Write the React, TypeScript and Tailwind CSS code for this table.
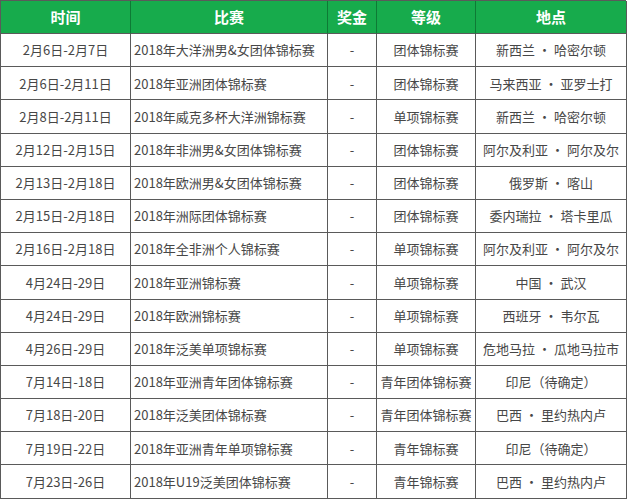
import React from "react";

const rows: [string, string, string, string, string][] = [
  ["2月6日-2月7日", "2018年大洋洲男&女团体锦标赛", "-", "团体锦标赛", "新西兰 · 哈密尔顿"],
  ["2月6日-2月11日", "2018年亚洲团体锦标赛", "-", "团体锦标赛", "马来西亚 · 亚罗士打"],
  ["2月8日-2月11日", "2018年威克多杯大洋洲锦标赛", "-", "单项锦标赛", "新西兰 · 哈密尔顿"],
  ["2月12日-2月15日", "2018年非洲男&女团体锦标赛", "-", "团体锦标赛", "阿尔及利亚 · 阿尔及尔"],
  ["2月13日-2月18日", "2018年欧洲男&女团体锦标赛", "-", "团体锦标赛", "俄罗斯 · 喀山"],
  ["2月15日-2月18日", "2018年洲际团体锦标赛", "-", "团体锦标赛", "委内瑞拉 · 塔卡里瓜"],
  ["2月16日-2月18日", "2018年全非洲个人锦标赛", "-", "单项锦标赛", "阿尔及利亚 · 阿尔及尔"],
  ["4月24日-29日", "2018年亚洲锦标赛", "-", "单项锦标赛", "中国 · 武汉"],
  ["4月24日-29日", "2018年欧洲锦标赛", "-", "单项锦标赛", "西班牙 · 韦尔瓦"],
  ["4月26日-29日", "2018年泛美单项锦标赛", "-", "单项锦标赛", "危地马拉 · 瓜地马拉市"],
  ["7月14日-18日", "2018年亚洲青年团体锦标赛", "-", "青年团体锦标赛", "印尼（待确定）"],
  ["7月18日-20日", "2018年泛美团体锦标赛", "-", "青年团体锦标赛", "巴西 · 里约热内卢"],
  ["7月19日-22日", "2018年亚洲青年单项锦标赛", "-", "青年锦标赛", "印尼（待确定）"],
  ["7月23日-26日", "2018年U19泛美团体锦标赛", "-", "青年锦标赛", "巴西 · 里约热内卢"],
];

const headers = ["时间", "比赛", "奖金", "等级", "地点"];

export default function App() {
  return (
    <div
      className="w-[629px] h-[500px] bg-white overflow-hidden"
      style={{ fontFamily: '"Noto Sans CJK SC", "Noto Sans", sans-serif' }}
    >
      <div className="w-[626px] grid grid-cols-[130px_197px_49px_99px_151px] border-t border-l border-[#5a5a5a]">
        {headers.map((h, i) => (
          <div
            key={h}
            className={`h-[33px] bg-[#17ab4c] text-white font-bold text-[15px] flex items-center justify-center border-b border-[#5a5a5a] ${
              i < 4 ? "border-r border-r-[#0e7a35]" : "border-r border-r-[#5a5a5a]"
            }`}
          >
            {h}
          </div>
        ))}
        {rows.map((r, ri) =>
          r.map((c, ci) => (
            <div
              key={`${ri}-${ci}`}
              className={`h-[33.2px] flex items-center text-[13px] text-[#474747] border-r border-b border-[#5a5a5a] whitespace-nowrap overflow-hidden ${
                ci === 1 ? "justify-start pl-[3px]" : "justify-center"
              }`}
            >
              {c}
            </div>
          ))
        )}
      </div>
    </div>
  );
}
